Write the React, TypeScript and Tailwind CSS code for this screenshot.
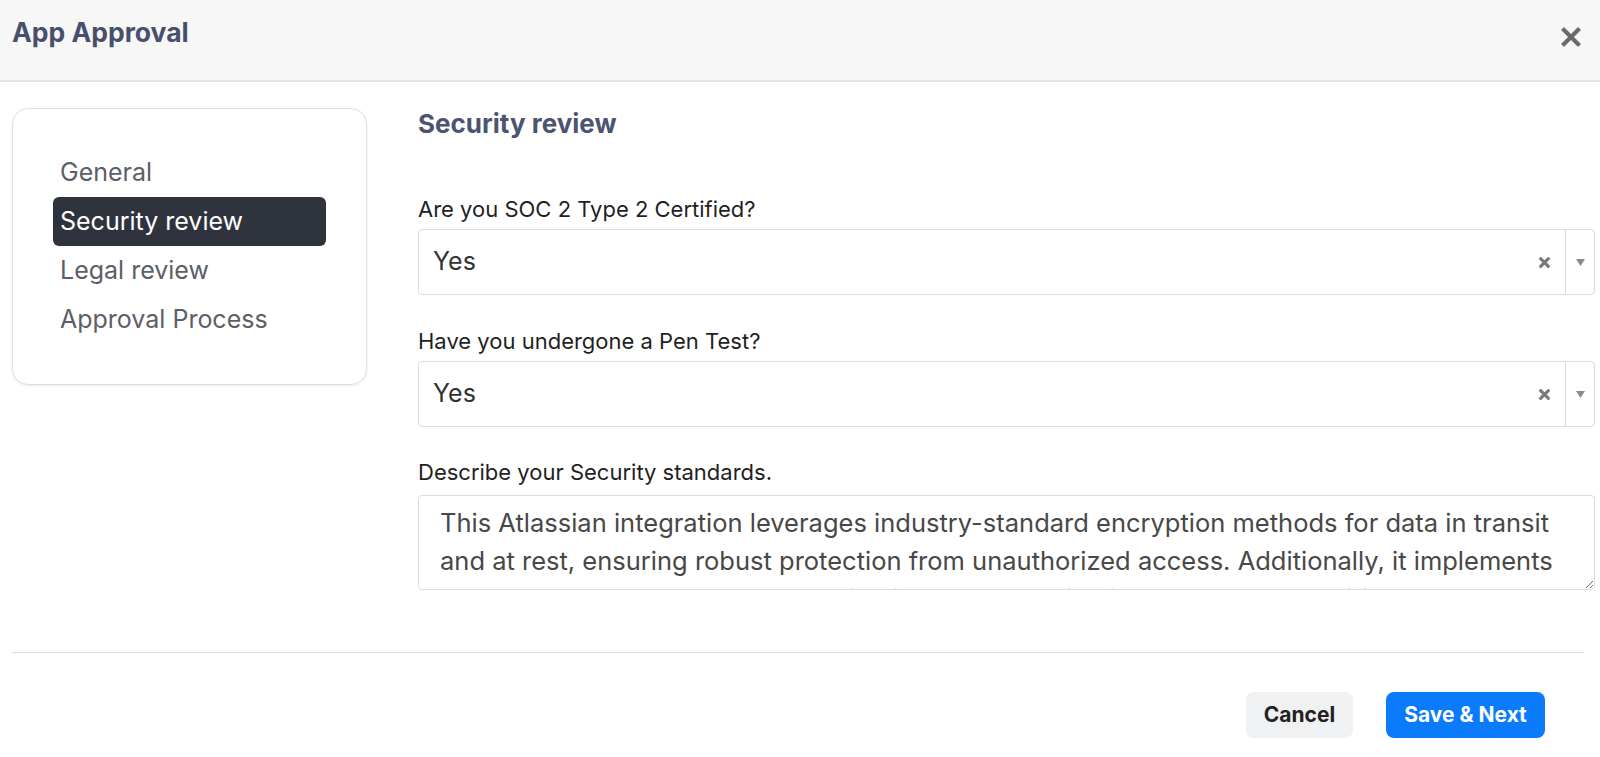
import { useState } from 'react';

const sections = ['General', 'Security review', 'Legal review', 'Approval Process'];

const questions = [
    { label: 'Are you SOC 2 Type 2 Certified?', value: 'Yes' },
    { label: 'Have you undergone a Pen Test?', value: 'Yes' },
];

const standards =
    'This Atlassian integration leverages industry-standard encryption methods for data in transit and at rest, ensuring robust protection from unauthorized access. Additionally, it implements OAuth 2.0 for secure user authentication and authorization, so that only verified users and services can reach sensitive workspace data.';

function SelectField({ value }: { value: string }) {
    return (
        <div className="flex h-[66px] items-stretch rounded-[4px] border border-[#dcdcdc] bg-white">
            <div className="flex flex-1 items-center pl-[14px] text-[25px] text-[#333]">{value}</div>
            <button className="flex w-[42px] items-center justify-center text-[#7a7a7a]">
                <svg width="11" height="11" viewBox="0 0 10 10">
                    <path d="M1.5 1.5l7 7M8.5 1.5l-7 7" stroke="currentColor" strokeWidth={2.8} strokeLinecap="round" />
                </svg>
            </button>
            <div className="w-px bg-[#dcdcdc]" />
            <div className="flex w-[28px] items-center justify-center text-[#8a8a8a]">
                <svg width="9" height="7" viewBox="0 0 9 7">
                    <path d="M0 0h9L4.5 7z" fill="currentColor" />
                </svg>
            </div>
        </div>
    );
}

export default function App() {
    const [active, setActive] = useState('Security review');

    return (
        <div className="h-[757px] w-full overflow-hidden bg-white font-['Inter',sans-serif]">
            <header className="flex h-[82px] items-start justify-between border-b-2 border-[#e3e3e3] bg-[#f7f7f8] pl-[12px] pr-[18px]">
                <h1 className="pt-[16px] text-[26.5px] font-bold leading-8 text-[#474f6b]">App Approval</h1>
                <button className="mt-[27px] text-[#6b6b6b]">
                    <svg width="22" height="20" viewBox="0 0 22 20">
                        <path d="M4 3l14 14M18 3L4 17" stroke="currentColor" strokeWidth={4.2} strokeLinecap="square" />
                    </svg>
                </button>
            </header>

            <div className="flex pl-[12px] pr-[5px] pt-[26px]">
                <nav className="w-[355px] self-start rounded-[16px] border border-[#dedede] px-[40px] pb-[40px] pt-[39px] shadow-[0_1px_3px_rgba(0,0,0,0.08)]">
                    {sections.map((s) => (
                        <div
                            key={s}
                            onClick={() => setActive(s)}
                            className={`flex h-[49px] cursor-pointer items-center rounded-[6px] pl-[7px] text-[25px] ${
                                s === active ? 'bg-[#2f333d] text-white' : 'text-[#5c5f66]'
                            }`}
                        >
                            {s}
                        </div>
                    ))}
                </nav>

                <main className="ml-[51px] flex-1">
                    <h2 className="text-[26px] font-bold leading-8 text-[#4b5470]">Security review</h2>

                    {questions.map((q, i) => (
                        <div key={q.label} className={i === 0 ? 'mt-[55px]' : 'mt-[32px]'}>
                            <label className="block text-[22px] leading-7 text-[#1f1f1f]">{q.label}</label>
                            <div className="mt-[6px]">
                                <SelectField value={q.value} />
                            </div>
                        </div>
                    ))}

                    <div className="mt-[31px]">
                        <label className="block text-[22px] leading-7 text-[#1f1f1f]">Describe your Security standards.</label>
                        <textarea
                            defaultValue={standards}
                            className="mt-[9px] block h-[95px] w-full resize-y overflow-hidden rounded-[4px] border border-[#dcdcdc] px-[21px] pt-[8px] text-[25.5px] leading-[38px] text-[#484848] outline-none"
                        />
                    </div>
                </main>
            </div>

            <div className="ml-[12px] mr-[16px] mt-[62px] h-px bg-[#dddddd]" />

            <footer className="flex justify-end gap-[33px] pr-[55px] pt-[39px]">
                <button className="h-[46px] w-[107px] rounded-[8px] bg-[#f0f1f3] text-[21px] font-bold text-[#222]">Cancel</button>
                <button className="h-[46px] w-[159px] rounded-[8px] bg-[#0a7cfb] text-[21px] font-bold text-white">Save &amp; Next</button>
            </footer>
        </div>
    );
}
